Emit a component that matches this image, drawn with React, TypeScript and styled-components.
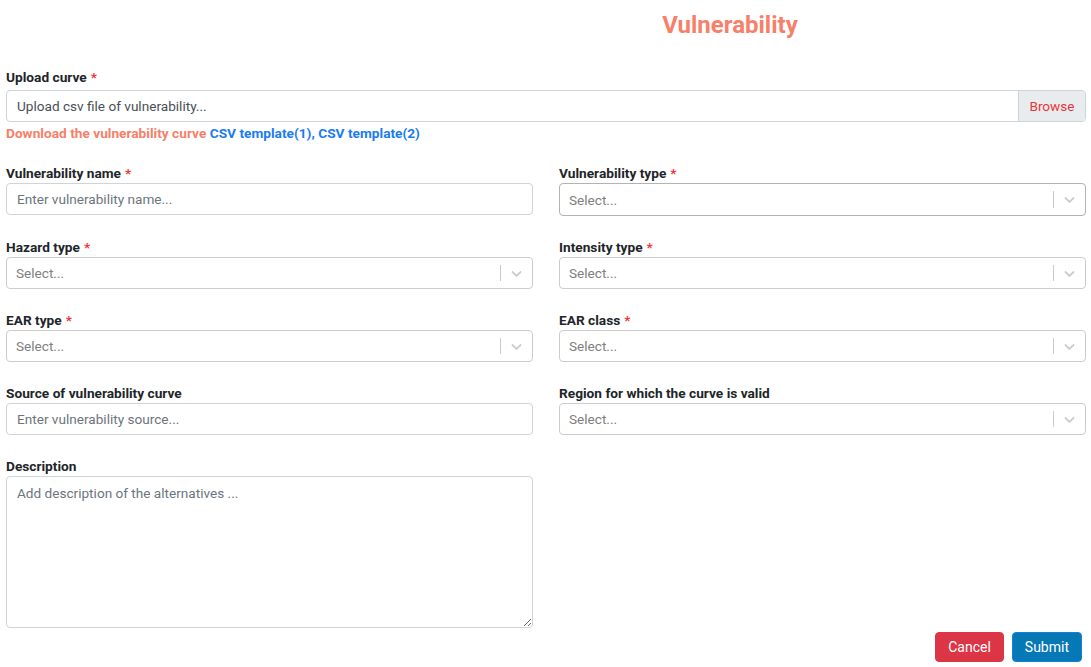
import React from 'react';
import styled, { createGlobalStyle } from 'styled-components';

const GlobalStyle = createGlobalStyle`
  * { box-sizing: border-box; }
  body {
    margin: 0;
    background: #ffffff;
    font-family: 'Roboto', 'Liberation Sans', sans-serif;
    color: #212529;
  }
`;

const Page = styled.div`
  padding: 0 5px 0 6px;
  width: 1091px;
`;

const Title = styled.h2`
  margin: 0;
  height: 50px;
  padding: 10px 0 0 368px;
  text-align: center;
  font-size: 24px;
  line-height: 30px;
  font-weight: 700;
  color: #f7806a;
`;

const Group = styled.div<{ $top?: number }>`
  display: flex;
  flex-direction: column;
  margin-top: ${(p) => p.$top ?? 0}px;
`;

const Label = styled.label<{ $gap?: number }>`
  font-size: 13.7px;
  line-height: 20px;
  font-weight: 700;
  color: #212529;
  margin-bottom: ${(p) => p.$gap ?? 0}px;
`;

const Req = styled.span`
  color: #f03434;
  margin-left: 4px;
`;

const FileBox = styled.div`
  display: flex;
  height: 32px;
  border: 1px solid #ced4da;
  border-radius: 4px;
  overflow: hidden;
`;

const FileText = styled.div`
  flex: 1;
  padding: 0 10px;
  display: flex;
  align-items: center;
  font-size: 13.6px;
  color: #495057;
`;

const Browse = styled.div`
  width: 67px;
  display: flex;
  align-items: center;
  justify-content: center;
  background: #e9ecef;
  border-left: 1px solid #ced4da;
  color: #e8373a;
  font-size: 13.6px;
`;

const Hint = styled.div`
  margin-top: 1px;
  font-size: 13.7px;
  line-height: 20px;
  font-weight: 700;
  color: #f7806a;
`;

const Link = styled.a`
  color: #1a7cf0;
  text-decoration: none;
`;

const Comma = styled.span`
  color: #1a7cf0;
`;

const Grid = styled.div`
  display: grid;
  grid-template-columns: 527px 527px;
  column-gap: 26px;
  row-gap: 21px;
  margin-top: 20px;
`;

const Field = styled.div`
  display: flex;
  flex-direction: column;
`;

const TextInput = styled.input`
  height: 32px;
  border: 1px solid #ced4da;
  border-radius: 4px;
  padding: 0 10px;
  font-family: inherit;
  font-size: 13.6px;
  color: #495057;
  outline: none;
  &::placeholder {
    color: #6c757d;
  }
`;

const SelectBox = styled.div<{ $hover?: boolean }>`
  height: ${(p) => (p.$hover ? 33 : 32)}px;
  border: 1px solid ${(p) => (p.$hover ? '#b3b3b3' : '#cccccc')};
  border-radius: 4px;
  display: flex;
  align-items: center;
`;

const SelectValue = styled.div`
  flex: 1;
  padding: 0 9px;
  font-size: 13.6px;
  color: #808080;
`;

const Separator = styled.span`
  align-self: stretch;
  width: 1px;
  margin: 7px 0;
  background: #cccccc;
`;

const Indicator = styled.div`
  width: 31px;
  display: flex;
  align-items: center;
  justify-content: center;
  color: #cccccc;
`;

const TextArea = styled.textarea`
  height: 152px;
  border: 1px solid #ced4da;
  border-radius: 4px;
  padding: 8px 10px;
  font-family: inherit;
  font-size: 13.6px;
  color: #495057;
  resize: vertical;
  outline: none;
  &::placeholder {
    color: #6c757d;
  }
`;

const Actions = styled.div`
  display: flex;
  justify-content: flex-end;
  gap: 8px;
  margin-top: 4px;
  padding-right: 4px;
`;

const Button = styled.button<{ $variant: 'cancel' | 'submit' }>`
  height: 30px;
  padding: 0 12px;
  border-radius: 4px;
  border: 1px solid ${(p) => (p.$variant === 'cancel' ? '#dc3545' : '#1780d6')};
  background: ${(p) => (p.$variant === 'cancel' ? '#dc3545' : '#0678b6')};
  color: #ffffff;
  font-family: inherit;
  font-size: 14px;
  cursor: pointer;
`;

const Chevron = () => (
  <svg width="17" height="17" viewBox="0 0 20 20" fill="currentColor">
    <path d="M4.516 7.548c0.436-0.446 1.043-0.481 1.576 0l3.908 3.747 3.908-3.747c0.533-0.481 1.141-0.446 1.574 0 0.436 0.445 0.408 1.197 0 1.615-0.406 0.418-4.695 4.502-4.695 4.502-0.217 0.223-0.502 0.335-0.787 0.335s-0.57-0.112-0.789-0.335c0 0-4.287-4.084-4.695-4.502s-0.436-1.17 0-1.615z" />
  </svg>
);

const Select: React.FC<{ hover?: boolean }> = ({ hover }) => (
  <SelectBox $hover={hover}>
    <SelectValue>Select...</SelectValue>
    <Separator />
    <Indicator>
      <Chevron />
    </Indicator>
  </SelectBox>
);

const App: React.FC = () => {
  return (
    <Page>
      <GlobalStyle />
      <Title>Vulnerability</Title>

      <Group $top={17}>
        <Label $gap={3}>
          Upload curve<Req>*</Req>
        </Label>
        <FileBox>
          <FileText>Upload csv file of vulnerability...</FileText>
          <Browse>Browse</Browse>
        </FileBox>
        <Hint>
          Download the vulnerability curve <Link href="#">CSV template(1)</Link>
          <Comma>, </Comma>
          <Link href="#">CSV template(2)</Link>
        </Hint>
      </Group>

      <Grid>
        <Field>
          <Label>
            Vulnerability name<Req>*</Req>
          </Label>
          <TextInput placeholder="Enter vulnerability name..." />
        </Field>
        <Field>
          <Label>
            Vulnerability type<Req>*</Req>
          </Label>
          <Select hover />
        </Field>

        <Field>
          <Label>
            Hazard type<Req>*</Req>
          </Label>
          <Select />
        </Field>
        <Field>
          <Label>
            Intensity type<Req>*</Req>
          </Label>
          <Select />
        </Field>

        <Field>
          <Label>
            EAR type<Req>*</Req>
          </Label>
          <Select />
        </Field>
        <Field>
          <Label>
            EAR class<Req>*</Req>
          </Label>
          <Select />
        </Field>

        <Field>
          <Label>Source of vulnerability curve</Label>
          <TextInput placeholder="Enter vulnerability source..." />
        </Field>
        <Field>
          <Label>Region for which the curve is valid</Label>
          <Select />
        </Field>

        <Field>
          <Label>Description</Label>
          <TextArea placeholder="Add description of the alternatives ..." />
        </Field>
      </Grid>

      <Actions>
        <Button $variant="cancel">Cancel</Button>
        <Button $variant="submit">Submit</Button>
      </Actions>
    </Page>
  );
};

export default App;
